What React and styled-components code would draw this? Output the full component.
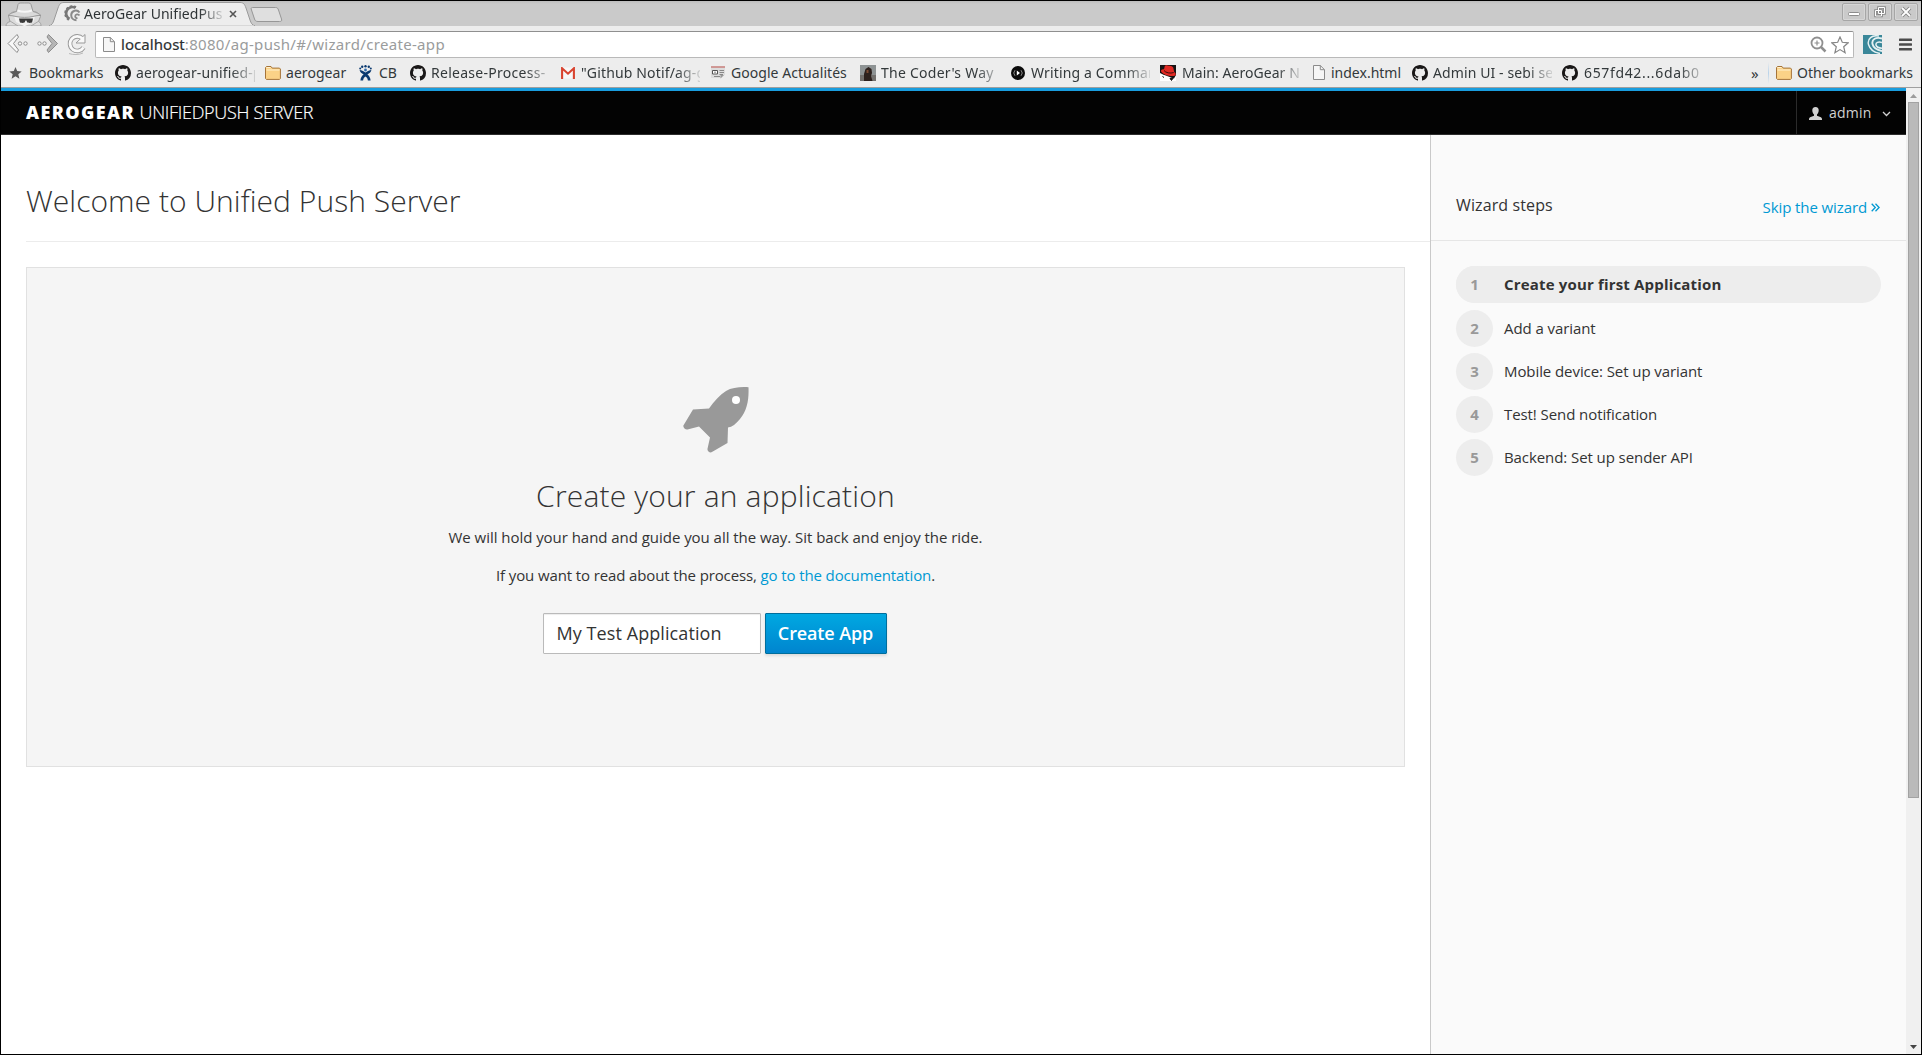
import React from "react";
import styled, { createGlobalStyle, css } from "styled-components";

const Global = createGlobalStyle`
  * { box-sizing: border-box; }
  body { margin: 0; background: #fff; }
`;

const chromeFont = `"Noto Sans", "Open Sans", sans-serif`;
const pageFont = `"Open Sans", "Noto Sans", sans-serif`;

const Window = styled.div`
  width: 1922px;
  height: 1055px;
  border: 1px solid #000;
  display: flex;
  flex-direction: column;
  overflow: hidden;
  background: #fff;
  font-family: ${pageFont};
`;

/* ---------- browser chrome ---------- */
const TabStrip = styled.div`
  height: 25px;
  flex: none;
  display: flex;
  background: linear-gradient(#bdbdbd, #cacaca 3px);
  font-family: ${chromeFont};
`;
const Incognito = styled.div`
  width: 48px;
  height: 25px;
  svg { display: block; }
`;
const Tab = styled.div`
  position: relative;
  width: 206px;
  height: 25px;
  display: flex;
  align-items: center;
  padding-left: 15px;
`;
const TabShape = styled.svg`
  position: absolute;
  left: 0;
  top: 0;
`;
const TabIcon = styled.svg`
  position: relative;
  flex: none;
`;
const Fade = css`
  overflow: hidden;
  mask-image: linear-gradient(to right, #000 calc(100% - 24px), rgba(0, 0, 0, 0.15));
`;
const TabTitle = styled.span`
  position: relative;
  width: 139px;
  margin-left: 3px;
  font-size: 14px;
  line-height: 24px;
  letter-spacing: ${(p) => p.$ls}px;
  color: #2f3436;
  white-space: nowrap;
  ${Fade}
`;
const TabClose = styled.svg`
  position: relative;
  margin-left: 6px;
`;
const NewTab = styled.svg`
  margin: 5px 0 0 -6px;
`;
const WindowButtons = styled.div`
  margin-left: auto;
  padding: 2px 3px 0 0;
  display: flex;
  gap: 2px;
`;
const WindowButton = styled.div`
  width: 24px;
  height: 18px;
  border: 1px solid #a6a6a6;
  box-shadow: inset 0 0 0 1px #d6d6d6;
  border-radius: 2px;
  display: flex;
  align-items: center;
  justify-content: center;
`;

const Toolbar = styled.div`
  height: 33px;
  flex: none;
  display: flex;
  align-items: flex-start;
  background: #ededed;
  font-family: ${chromeFont};
`;
const NavButtons = styled.div`
  width: 94px;
  height: 33px;
  svg { display: block; }
`;
const UrlBar = styled.div`
  width: 1759px;
  height: 27px;
  margin-top: 5px;
  border: 1px solid #b9b9b9;
  border-top-color: #8f8f8f;
  border-radius: 2px;
  background: #fff;
  display: flex;
  align-items: center;
  padding: 0 4px 0 7px;
`;
const UrlText = styled.div`
  margin-left: 6px;
  padding-bottom: 1px;
  flex: 1;
  font-size: 15px;
  line-height: 23px;
  letter-spacing: 0.32px;
  white-space: nowrap;
  color: #9a9c9c;
  b { font-weight: 400; color: #2b3032; letter-spacing: 0.05px; -webkit-text-stroke: 0.2px #2b3032; }
`;
const UrlIcons = styled.div`
  display: flex;
  gap: 4px;
`;
const ToolbarRight = styled.div`
  display: flex;
  align-items: center;
  height: 33px;
  padding: 3px 0 0 9px;
  gap: 17px;
`;

const Bookmarks = styled.div`
  height: 29px;
  flex: none;
  display: flex;
  align-items: center;
  padding: 0 0 1px 8px;
  background: #ededed;
  border-bottom: 1px solid #9f9f9f;
  font-family: ${chromeFont};
`;
const Bookmark = styled.div`
  flex: 0 0 ${(p) => p.$w}px;
  display: flex;
  align-items: center;
  svg { flex: none; display: block; }
`;
const BookmarkLabel = styled.span`
  width: ${(p) => p.$w}px;
  margin-left: ${(p) => p.$gap}px;
  font-size: 14px;
  line-height: 24px;
  letter-spacing: ${(p) => p.$ls}px;
  white-space: nowrap;
  color: #33393b;
  ${(p) => p.$fade && Fade}
`;
const Separator = styled.div`
  width: 1px;
  height: 22px;
  margin: 0 7px 0 8px;
  background: linear-gradient(#ededed, #b9d3ea, #ededed);
`;
const Overflow = styled.span`
  font-size: 15px;
  line-height: 20px;
  width: 9px;
  margin-left: auto;
  color: #33393b;
`;

/* ---------- page ---------- */
const Viewport = styled.div`
  flex: 1;
  display: flex;
  min-height: 0;
`;
const Page = styled.div`
  flex: 1;
  display: flex;
  flex-direction: column;
  min-width: 0;
`;
const Header = styled.header`
  height: 47px;
  flex: none;
  display: flex;
  justify-content: space-between;
  background: #030303;
  border-top: 3px solid #199dde;
  border-bottom: 1px solid #2c2c2c;
`;
const Brand = styled.div`
  padding-left: 25px;
  font-size: 18px;
  font-weight: 300;
  line-height: 43px;
  letter-spacing: -0.3px;
  color: #fff;
  white-space: nowrap;
  -webkit-text-stroke: 0.2px #fff;
  b { font-weight: 800; letter-spacing: 1.4px; -webkit-text-stroke: 0; }
`;
const UserMenu = styled.div`
  width: 110px;
  border-left: 1px solid #2b2b2b;
  display: flex;
  align-items: center;
  padding: 0 0 0 12px;
  font-size: 14px;
  color: #d1d1d1;
  svg { position: relative; top: 1px; }
  span { margin: 0 11px 0 7px; letter-spacing: 0.2px; }
`;
const Columns = styled.div`
  flex: 1;
  display: flex;
`;
const Main = styled.main`
  width: 1429px;
  padding-left: 25px;
`;
const PageTitle = styled.h1`
  margin: 0 0 25px;
  height: 107px;
  padding-top: 45px;
  border-bottom: 1px solid #ececec;
  font-size: 30px;
  line-height: 41px;
  font-weight: 300;
  letter-spacing: 0.04px;
  color: #333;
`;
const Blank = styled.section`
  width: 1379px;
  height: 500px;
  border: 1px solid #e1e1e1;
  background: #f5f5f5;
  display: flex;
  flex-direction: column;
  align-items: center;
  padding-top: 119px;
  color: #333;
  svg { display: block; }
`;
const BlankTitle = styled.h2`
  margin: 22px 0 0;
  font-size: 30px;
  line-height: 41px;
  font-weight: 300;
  letter-spacing: 0.17px;
`;
const Text = styled.p`
  margin: ${(p) => p.$top}px 0 0;
  font-size: 15px;
  line-height: 25px;
  letter-spacing: ${(p) => p.$ls}px;
  white-space: nowrap;
`;
const Link = styled.a`
  color: #0099d3;
`;
const Form = styled.div`
  display: flex;
  gap: 4px;
  margin: 25px 2px 0 0;
`;
const Input = styled.input`
  width: 218px;
  height: 41px;
  padding: 0 13px 2px;
  border: 1px solid #bababa;
  border-radius: 1px;
  box-shadow: inset 0 1px 1px rgba(0, 0, 0, 0.075);
  background: #fff;
  font: 400 18px/36px ${pageFont};
  letter-spacing: 0.08px;
  color: #333;
`;
const Button = styled.button`
  width: 122px;
  height: 41px;
  padding: 0 0 2px;
  border: 1px solid #006e9c;
  border-radius: 1px;
  background: linear-gradient(#00a8e1, #0085cf);
  box-shadow: 0 2px 3px rgba(0, 0, 0, 0.1);
  font: 600 18px/36px ${pageFont};
  letter-spacing: -0.12px;
  white-space: nowrap;
  color: #fff;
`;

const Sidebar = styled.aside`
  flex: 1;
  border-left: 1px solid #c9c9c9;
  background: #fafafa;
`;
const SideHead = styled.div`
  height: 106px;
  display: flex;
  justify-content: space-between;
  align-items: baseline;
  padding: 55px 26px 0 25px;
  border-bottom: 1px solid #e6e6e6;
`;
const SideTitle = styled.h3`
  margin: 0;
  font-size: 16px;
  line-height: 26px;
  font-weight: 400;
  letter-spacing: 0.12px;
  color: #333;
`;
const Skip = styled.a`
  padding-top: 3px;
  display: flex;
  align-items: center;
  gap: 4px;
  font-size: 15px;
  line-height: 25px;
  letter-spacing: -0.1px;
  color: #0099d3;
  transform: translateY(2px);
`;
const Steps = styled.ol`
  margin: 25px 25px 0;
  padding: 0;
  list-style: none;
  display: flex;
  flex-direction: column;
  gap: 6px;
`;
const Step = styled.li`
  display: flex;
  align-items: center;
  height: 37px;
  margin-bottom: ${(p) => (p.$active ? 1 : 0)}px;
  border-radius: 19px;
  background: ${(p) => (p.$active ? "#ededed" : "none")};
  font-size: 15px;
  line-height: 37px;
  font-weight: ${(p) => (p.$active ? 700 : 400)};
  letter-spacing: ${(p) => (p.$active ? 0.17 : -0.08)}px;
  color: #333;
`;
const StepNumber = styled.span`
  width: 37px;
  height: 37px;
  border-radius: 50%;
  margin-right: 11px;
  background: #ededed;
  text-align: center;
  font-weight: 700;
  color: #999;
`;
const StepLabel = styled.span`
  height: 37px;
`;

const Scrollbar = styled.div`
  width: 15px;
  background: #f0f0f0;
  display: flex;
  flex-direction: column;
  align-items: center;
  svg { display: block; flex: none; }
`;
const Thumb = styled.div`
  width: 11px;
  height: 696px;
  background: #bababa;
  border: 1px solid #a2a2a2;
`;
const Spacer = styled.div`
  flex: 1;
`;

/* ---------- icons ---------- */
const Github = () => (
  <svg width="16" height="16" viewBox="0 0 16 16">
    <path fill="#191717" d="M8 0C3.58 0 0 3.58 0 8c0 3.54 2.29 6.53 5.47 7.59.4.07.55-.17.55-.38 0-.19-.01-.82-.01-1.49-2.01.37-2.53-.49-2.69-.94-.09-.23-.48-.94-.82-1.13-.28-.15-.68-.52-.01-.53.63-.01 1.08.58 1.23.82.72 1.21 1.87.87 2.33.66.07-.52.28-.87.51-1.07-1.78-.2-3.64-.89-3.64-3.95 0-.87.31-1.59.82-2.15-.08-.2-.36-1.02.08-2.12 0 0 .67-.21 2.2.82.64-.18 1.32-.27 2-.27s1.36.09 2 .27c1.53-1.04 2.2-.82 2.2-.82.44 1.1.16 1.92.08 2.12.51.56.82 1.27.82 2.15 0 3.07-1.87 3.75-3.65 3.95.29.25.54.73.54 1.48 0 1.07-.01 1.93-.01 2.2 0 .21.15.46.55.38A8.01 8.01 0 0 0 16 8c0-4.42-3.58-8-8-8z" />
  </svg>
);
const Folder = () => (
  <svg width="16" height="14" viewBox="0 0 16 14">
    <path d="M.5 12.5V1.5l1-1h4.500l1.200 1.600h7.300l.9.9v9.500l-.9.9H1.400z" fill="#fbd287" stroke="#a5743a" />
    <path d="M1.500 4h13M1.500 1.500h4" stroke="#fff1cf" fill="none" />
  </svg>
);
const StarSolid = () => (
  <svg width="13" height="12" viewBox="0 0 13 12">
    <path fill="#5a5a5a" d="M6.500 0l1.700 4.100 4.500.3-3.400 2.900 1.100 4.400-3.900-2.400-3.900 2.400 1.100-4.400L.3 4.400l4.500-.3z" />
  </svg>
);
const Jira = () => (
  <svg width="13" height="16" viewBox="0 0 13 16">
    <g fill="#0b3a70">
      <circle cx="3.2" cy="1.8" r="1.2" /><circle cx="6.5" cy="1.2" r="1.2" /><circle cx="9.8" cy="1.8" r="1.2" />
      <circle cx="1.2" cy="3.6" r="1" /><circle cx="11.8" cy="3.6" r="1" />
      <path d="M.6 5c2 0 3.600 1 5.900 2.600C8.800 6 10.400 5 12.400 5c-.5 2.200-2 3.400-4 4.400 1.800 1.300 3 3.300 3.200 6H8.900c-.2-1.900-1-3.200-2.400-4-1.400.8-2.200 2.100-2.400 4H1.400c.2-2.700 1.400-4.700 3.200-6C2.600 8.400 1.100 7.200.6 5z" />
    </g>
    <circle cx="6.500" cy="5" r="1.400" fill="#2f6eb0" />
  </svg>
);
const Gmail = () => (
  <svg width="14" height="12" viewBox="0 0 14 12">
    <path d="M1 .5h12v11H1z" fill="#f7f7f7" />
    <path d="M1.100 12V1.300L7 6.700l5.900-5.400V12" fill="none" stroke="#d8432f" strokeWidth="2.100" />
  </svg>
);
const News = () => (
  <svg width="14" height="13" viewBox="0 0 14 13">
    <path d="M0 1.500h14v7l-3.500 3.500H0z" fill="#dcdcdc" />
    <path d="M0 1h14" stroke="#c98480" strokeWidth="1.600" />
    <path d="M1.500 4.500h5v3.500h-5z" fill="#fff" stroke="#555" />
    <path d="M3 6.200h2M8.500 4.500H13M8.500 6.500H13M8.500 8.500H12M3 10.500h6" stroke="#888" />
    <path d="M9.500 12.500V9h3.500z" fill="#999" />
  </svg>
);
const Coder = () => (
  <svg width="16" height="16" viewBox="0 0 16 16">
    <path d="M0 0h16v16H0z" fill="#8e9394" />
    <path d="M0 10h16v6H0z" fill="#73706d" />
    <path d="M4 16V9l1.500-5 3-2 3 2 .5 4-1 3 1.500 5z" fill="#2d211d" />
    <path d="M6.500 5h2v3h-2z" fill="#7a4b33" />
  </svg>
);
const Disc = () => (
  <svg width="14" height="14" viewBox="0 0 14 14">
    <circle cx="7" cy="7" r="7" fill="#0b0b0b" />
    <path d="M4 4.200a4.200 4.200 0 0 0 0 5.600M10 4.200a4.200 4.200 0 0 1 0 5.600" stroke="#aaa" strokeWidth=".8" fill="none" />
    <path d="M5.800 4.500L9 7 5.800 9.500z" fill="#fff" />
  </svg>
);
const RedHat = () => (
  <svg width="16" height="16" viewBox="0 0 16 16">
    <path d="M0 0h16v16H0z" fill="#fff" />
    <path d="M0 0h16v10l-2 3.500-3-1L3 9.500 0 8z" fill="#151313" />
    <path d="M1 6.500C.5 4.500 3 4.300 4 4.300L4.800 1c.8-1.200 2.500-.6 4-.2 1.700-.4 4 .5 4.400 1.800l1 4.400c1 .6 2 2 1.300 3.200C13.500 12 4 11 1 6.500z" fill="#e02a24" />
    <path d="M4 5.500c1.500 2.300 6.500 3.300 9.700 2" stroke="#2b0b0b" strokeWidth=".9" fill="none" />
    <path d="M2.500 11.500l1.500 1M10 13.500l1.500 2 2-3z" stroke="#151313" fill="#151313" />
  </svg>
);
const Doc = ({ w = 12, h = 15 }) => (
  <svg width={w} height={h} viewBox="0 0 12 15">
    <path d="M.5.500h6.800l4.200 4.200v9.800H.5z" fill="#f6f6f6" stroke="#8b8b8b" />
    <path d="M7.300.500v4.200h4.200" fill="none" stroke="#8b8b8b" />
  </svg>
);

const bookmarks = [
  { icon: <StarSolid />, label: "Bookmarks", gap: 7, w: 106, lw: 80, ls: 0 },
  { icon: <Github />, label: "aerogear-unified-p", gap: 5, w: 150, lw: 119, ls: 0.12, fade: true },
  { icon: <Folder />, label: "aerogear", gap: 5, w: 94, lw: 66, ls: 0.05 },
  { icon: <Jira />, label: "CB", gap: 7, w: 51, lw: 24, ls: 0 },
  { icon: <Github />, label: "Release-Process-", gap: 5, w: 151, lw: 119, ls: 0.28, fade: true },
  { icon: <Gmail />, label: "\"Github Notif/ag-g", gap: 6, w: 150, lw: 119, ls: 0.15, fade: true },
  { icon: <News />, label: "Google Actualités", gap: 6, w: 149, lw: 125, ls: 0.05 },
  { icon: <Coder />, label: "The Coder's Way", gap: 5, w: 151, lw: 119, ls: 0.25, fade: true },
  { icon: <Disc />, label: "Writing a Comman", gap: 6, w: 149, lw: 119, ls: 0.15, fade: true },
  { icon: <RedHat />, label: "Main: AeroGear N", gap: 6, w: 153, lw: 119, ls: 0.05, fade: true },
  { icon: <Doc />, label: "index.html", gap: 6, w: 99, lw: 75, ls: 0 },
  { icon: <Github />, label: "Admin UI - sebi se", gap: 5, w: 150, lw: 119, ls: 0.1, fade: true },
  { icon: <Github />, label: "657fd42...6dab0", gap: 6, w: 150, lw: 119, ls: 0.65, fade: true },
];

const steps = [
  "Create your first Application",
  "Add a variant",
  "Mobile device: Set up variant",
  "Test! Send notification",
  "Backend: Set up sender API",
];

export default function App() {
  return (
    <Window>
      <Global />
      <TabStrip>
        <Incognito>
          <svg width="48" height="25" viewBox="0 0 48 25">
            <path d="M5 25c0-2 1-3.500 4-4.500L7.500 15l4-4 24 0 4 4.500-2 5c2 1 2.500 2.500 2.500 4.500z" fill="#dcdcdc" stroke="#a0a0a0" />
            <path d="M13 15h21l-1.500 6L24 25h-1l-8-4z" fill="#f1f1f1" />
            <path d="M7 14.500c2-2 5-3 8.500-4L17 3.500c.5-2 3-1.500 6.500-1.500s6-.5 6.500 1.500l2 7c3 .8 6 2 8 4-3-.2-5 .2-8 1-5 1.200-12 1.200-17 0-3-.8-5-1-8-1z" fill="#dadada" stroke="#999" />
            <path d="M16.500 9.500c4 1.600 10 1.600 14.500 0" fill="none" stroke="#f6f6f6" strokeWidth="2" />
            <path d="M18 17.500h14l-.8 3.500c-.5 1.200-4.500 1.200-5.200 0l-.6-1.500h-.9l-.6 1.500c-.7 1.200-4.600 1.200-5.100 0z" fill="#3a3a3a" />
            <path d="M9 20l8 5M38 20l-8 5" stroke="#a6a6a6" fill="none" />
          </svg>
        </Incognito>
        <Tab>
          <TabShape width="206" height="25" viewBox="0 0 206 25">
            <path d="M0 25c3-1 4-3 5-6l4-12c1.500-4 2.500-5.500 6-5.500h176c3.500 0 4.500 1.500 6 5.500l4 12c1 3 2 5 5 6z" fill="#ededed" stroke="#9a9a9a" />
            <path d="M1 25h204" stroke="#ededed" />
          </TabShape>
          <TabIcon width="17" height="17" viewBox="0 0 17 17">
            <path d="M11.500 2.800A6.300 6.300 0 1 0 5.500 14" fill="none" stroke="#777" strokeWidth="2.600" />
            <path d="M12 2.200A7.200 7.200 0 1 0 5 15" fill="none" stroke="#777" strokeWidth="2" strokeDasharray="2.200 1.800" />
            <path d="M15.500 7.500C13 4 7.500 5.500 7.200 10c0 3.200 2.500 5.300 5.300 5.300" fill="none" stroke="#8a8a8a" strokeWidth="2" />
            <path d="M15.500 10.500c-1.300-2-4.300-1.300-4.300.8 0 1.300 1.100 2 2.300 1.800" fill="none" stroke="#8a8a8a" strokeWidth="1.800" />
          </TabIcon>
          <TabTitle $ls={0.05}>AeroGear UnifiedPus</TabTitle>
          <TabClose width="8" height="8" viewBox="0 0 8 8">
            <path d="M1 1l6 6M7 1L1 7" stroke="#555" strokeWidth="1.600" />
          </TabClose>
        </Tab>
        <NewTab width="34" height="17" viewBox="0 0 34 17">
          <path d="M3.500 1.500h23c2 0 2.500 1 3 2.500l3 9c.6 2-.3 2.500-2 2.500H9c-2 0-3-.8-3.500-2.500l-3-9C1.900 2.300 2 1.500 3.500 1.500z" fill="#dfdfdf" stroke="#979797" />
        </NewTab>
        <WindowButtons>
          <WindowButton>
            <svg width="12" height="12" viewBox="0 0 12 12"><rect x=".5" y="6.500" width="11" height="3" rx="1" fill="#fff" stroke="#8d8d8d" /></svg>
          </WindowButton>
          <WindowButton>
            <svg width="12" height="12" viewBox="0 0 12 12">
              <path d="M4.500 1.500h6v6h-6zM1.500 4.500h6V10h-6z" fill="none" stroke="#858585" strokeWidth="2.600" />
              <path d="M4.500 1.500h6v6h-6zM1.500 4.500h6V10h-6z" fill="none" stroke="#fff" strokeWidth="1" />
            </svg>
          </WindowButton>
          <WindowButton>
            <svg width="12" height="12" viewBox="0 0 12 12">
              <path d="M2 2l8 8M10 2l-8 8" stroke="#858585" strokeWidth="3.800" />
              <path d="M2 2l8 8M10 2l-8 8" stroke="#fff" strokeWidth="1.800" />
            </svg>
          </WindowButton>
        </WindowButtons>
      </TabStrip>

      <Toolbar>
        <NavButtons>
          <svg width="94" height="33" viewBox="0 0 94 33">
            <g fill="#f8f8f8" stroke="#8d8d8d" strokeWidth="1">
              <path d="M16 8.500L7 17.500l9 9 1.500-2.500-5-6.500 5-6.500z" />
              <circle cx="19" cy="17.500" r="1.700" /><circle cx="24.500" cy="17.500" r="1.700" />
              <path d="M47.500 8.500l9 9-9 9-1.500-2.500 5-6.500-5-6.500z" fill="#b5b5b5" />
              <circle cx="38.500" cy="17.500" r="1.700" /><circle cx="43.500" cy="17.500" r="1.700" />
            </g>
            <path d="M81.500 12.500a7.300 7.300 0 1 0 1 9" fill="none" stroke="#999" strokeWidth="4.600" />
            <path d="M84 8.500v8.500h-9z" fill="#f9f9f9" stroke="#999" />
            <path d="M81.500 12.500a7.300 7.300 0 1 0 1 9" fill="none" stroke="#f9f9f9" strokeWidth="2.800" />
            <path d="M68 27.500c4 1.500 10 1.500 14-.5" fill="none" stroke="#bbb" />
          </svg>
        </NavButtons>
        <UrlBar>
          <Doc />
          <UrlText><b>localhost</b>:8080/ag-push/#/wizard/create-app</UrlText>
          <UrlIcons>
            <svg width="17" height="17" viewBox="0 0 17 17">
              <circle cx="7" cy="7" r="5.500" fill="none" stroke="#8f8f8f" strokeWidth="1.800" />
              <path d="M7 4.500v5M4.500 7h5" stroke="#8f8f8f" strokeWidth="1.200" />
              <path d="M11 11l4.500 4.500" stroke="#8f8f8f" strokeWidth="2.500" />
            </svg>
            <svg width="18" height="18" viewBox="0 0 18 18">
              <path d="M9 1l2.300 5.300 5.900.5-4.500 3.900 1.400 6L9 13.600l-5.100 3.100 1.400-6L.8 6.800l5.900-.5z" fill="#fff" stroke="#868686" strokeWidth="1.200" />
            </svg>
          </UrlIcons>
        </UrlBar>
        <ToolbarRight>
          <svg width="19" height="19" viewBox="0 0 19 19">
            <path d="M0 0h19v19H0z" fill="#3a8799" />
            <path d="M16 1C9-.5 4 4 5.500 9.500 6.800 14 11 17.500 17 18.500" fill="none" stroke="#e5f1f3" strokeWidth="1.400" />
            <path d="M19 3.500C13 1.500 8.500 4.500 9.500 9c.8 3.500 4.500 6 9.500 7" fill="none" stroke="#e5f1f3" strokeWidth="1.900" />
            <path d="M19 7.500c-3.500-1.200-6.500 0-6 2.500.4 1.800 3 3 6 3.200" fill="none" stroke="#e5f1f3" strokeWidth="1.500" />
          </svg>
          <svg width="13" height="13" viewBox="0 0 13 13">
            <path d="M1 1.700h11M1 6.500h11M1 11.300h11" stroke="#4b4b4b" strokeWidth="2.600" strokeLinecap="round" />
          </svg>
        </ToolbarRight>
      </Toolbar>

      <Bookmarks>
        {bookmarks.map((b) => (
          <Bookmark key={b.label} $w={b.w}>
            {b.icon}
            <BookmarkLabel $gap={b.gap} $w={b.lw} $ls={b.ls} $fade={b.fade}>{b.label}</BookmarkLabel>
          </Bookmark>
        ))}
        <Overflow>»</Overflow>
        <Separator />
        <Bookmark $w={145}>
          <Folder />
          <BookmarkLabel $gap={5} $w={124} $ls={0}>Other bookmarks</BookmarkLabel>
        </Bookmark>
      </Bookmarks>

      <Viewport>
        <Page>
          <Header>
            <Brand><b>AEROGEAR</b> UNIFIEDPUSH SERVER</Brand>
            <UserMenu>
              <svg width="13" height="13" viewBox="0 0 13 13">
                <path fill="#d1d1d1" d="M6.500 0c2.200 0 3.300 1.500 3.200 3.500-.1 1.800-.7 3.200-1.700 4v1.300c1.500.7 4 1.200 4.700 2.300.3.500.3 1.200.3 1.900H0c0-.7 0-1.400.3-1.900.7-1.100 3.200-1.600 4.700-2.300V7.500c-1-.8-1.600-2.200-1.700-4C3.200 1.500 4.300 0 6.500 0z" />
              </svg>
              <span>admin</span>
              <svg width="9" height="6" viewBox="0 0 9 6"><path d="M1 1l3.500 3.500L8 1" fill="none" stroke="#d1d1d1" strokeWidth="1.300" /></svg>
            </UserMenu>
          </Header>
          <Columns>
            <Main>
              <PageTitle>Welcome to Unified Push Server</PageTitle>
              <Blank>
                <svg width="66" height="66" viewBox="0 0 66 66">
                  <path fill="#999" d="M65.500.2C66 13 64 24 57 32c-4 5-8 8-12 8.500L44.500 56 28.500 65.300c-2 .8-4.500-1.800-4-3.600L27 50.500 16 39.500 4.500 42.500C2.500 43-.3 40.300.4 38.400L10 22.400l16-.8C31 14 37 8 43 4 49 .5 57-.3 65.500.2z" />
                  <circle cx="53" cy="13" r="4" fill="#fff" />
                </svg>
                <BlankTitle>Create your an application</BlankTitle>
                <Text $top={9} $ls={-0.04}>We will hold your hand and guide you all the way. Sit back and enjoy the ride.</Text>
                <Text $top={13} $ls={-0.12}>If you want to read about the process, <Link>go to the documentation</Link>.</Text>
                <Form>
                  <Input defaultValue="My Test Application" />
                  <Button>Create App</Button>
                </Form>
              </Blank>
            </Main>
            <Sidebar>
              <SideHead>
                <SideTitle>Wizard steps</SideTitle>
                <Skip>
                  Skip the wizard
                  <svg width="9" height="9" viewBox="0 0 9 9"><path d="M.7.700l3.600 3.800L.7 8.300M4.500.700l3.600 3.800-3.600 3.800" fill="none" stroke="#0099d3" strokeWidth="1.300" /></svg>
                </Skip>
              </SideHead>
              <Steps>
                {steps.map((s, i) => (
                  <Step key={s} $active={i === 0}>
                    <StepNumber>{i + 1}</StepNumber>
                    <StepLabel>{s}</StepLabel>
                  </Step>
                ))}
              </Steps>
            </Sidebar>
          </Columns>
        </Page>
        <Scrollbar>
          <svg width="15" height="14" viewBox="0 0 15 14"><path d="M7.500 6l3.500 4H4z" fill="#9b9b9b" /></svg>
          <Thumb />
          <Spacer />
          <svg width="15" height="14" viewBox="0 0 15 14"><path d="M4 5h7l-3.500 4z" fill="#444" /></svg>
        </Scrollbar>
      </Viewport>
    </Window>
  );
}
